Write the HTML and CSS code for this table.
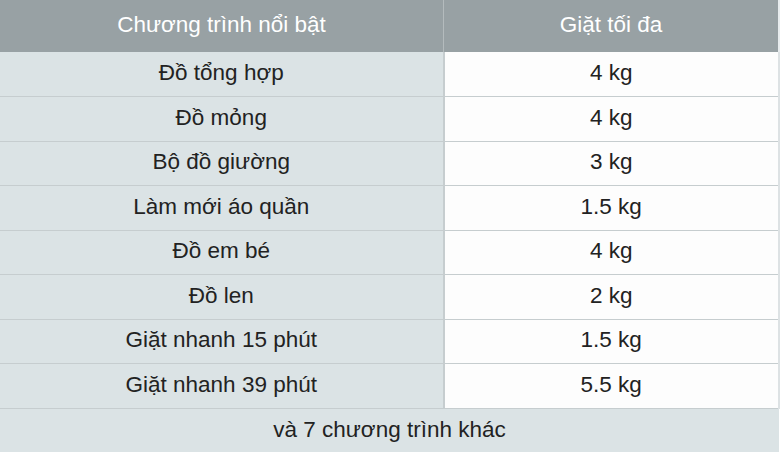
FILE: index.html
```html
<!DOCTYPE html>
<html lang="vi">
<head>
<meta charset="utf-8">
<link rel="stylesheet" href="styles.css">
</head>
<body>
<table class="spec">
  <thead>
    <tr class="head"><th class="c1">Chương trình nổi bật</th><th class="c2">Giặt tối đa</th></tr>
  </thead>
  <tbody>
    <tr class="row"><td class="c1">Đồ tổng hợp</td><td class="c2">4 kg</td></tr>
    <tr class="row"><td class="c1">Đồ mỏng</td><td class="c2">4 kg</td></tr>
    <tr class="row"><td class="c1">Bộ đồ giường</td><td class="c2">3 kg</td></tr>
    <tr class="row"><td class="c1">Làm mới áo quần</td><td class="c2">1.5 kg</td></tr>
    <tr class="row"><td class="c1">Đồ em bé</td><td class="c2">4 kg</td></tr>
    <tr class="row"><td class="c1">Đồ len</td><td class="c2">2 kg</td></tr>
    <tr class="row"><td class="c1">Giặt nhanh 15 phút</td><td class="c2">1.5 kg</td></tr>
    <tr class="row"><td class="c1">Giặt nhanh 39 phút</td><td class="c2">5.5 kg</td></tr>
    <tr class="foot"><td class="all" colspan="2">và 7 chương trình khác</td></tr>
  </tbody>
</table>
</body>
</html>
```
FILE: styles.css
```css
html, body {
  margin: 0;
  padding: 0;
  background: #ffffff;
}
body {
  width: 780px;
  height: 452px;
  overflow: hidden;
  font-family: "Liberation Sans", Arial, sans-serif;
}
.spec {
  width: 780px;
  border-collapse: collapse;
  table-layout: fixed;
  font-size: 22.5px;
}
.spec th, .spec td {
  padding: 0;
  text-align: center;
  vertical-align: middle;
  line-height: 1;
}
.head {
  height: 52px;
  background: #98a1a4;
  color: #ffffff;
}
.head th {
  font-weight: normal;
  padding-bottom: 2px;
}
.head .c1 {
  width: 443px;
  border-right: 1px solid #b4bbbd;
}
.head .c2 {
  border-right: 2px solid #e8ecee;
}
.row {
  height: 44.5px;
  color: #222222;
}
.row td {
  border-bottom: 1px solid #c6cdcf;
  padding-bottom: 2px;
}
.row .c1 {
  background: #dbe3e5;
  border-right: 2px solid #c6cdcf;
}
.row .c2 {
  background: #fdfdfd;
  border-right: 2px solid #dde2e4;
}
.foot {
  height: 44px;
  background: #dbe3e5;
  color: #222222;
}
```
